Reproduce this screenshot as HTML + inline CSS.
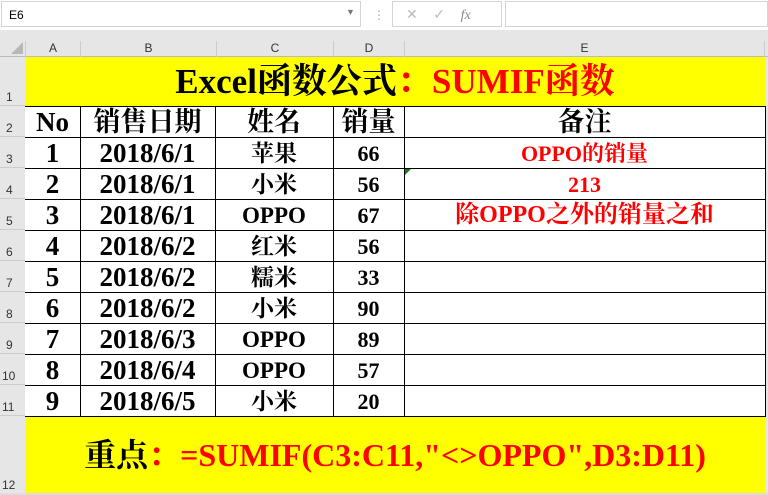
<html><head><style>
body{margin:0;width:768px;height:495px;background:#e6e6e6;position:relative;overflow:hidden;font-family:"Liberation Serif","Noto Serif CJK SC",serif}
div{position:absolute;box-sizing:border-box}
.h{font-family:"Liberation Sans",sans-serif;font-size:12px;color:#333;text-align:center}
.c{font-weight:bold;font-size:27px;text-align:center;color:#000;line-height:31px;white-space:nowrap}
.r{color:#f00;font-size:22px}
.n{font-size:23px}
.m{font-size:22px}
</style></head><body>
<div style="left:0;top:0;width:768px;height:30px;background:#fff"></div>
<div style="left:1px;top:1px;width:360px;height:26px;border:1px solid #d4d4d4;background:#fff;font-family:'Liberation Sans';font-size:12px;padding:6px 0 0 7px">E6<span style="position:absolute;left:344px;top:5px;color:#777;font-size:9px">▼</span></div>
<div style="left:373px;top:8px;color:#aaa;font-size:12px">⋮</div>
<div style="left:392px;top:1px;width:110px;height:26px;border:1px solid #d4d4d4;background:#fff;color:#bbb;font-family:'Liberation Sans';font-size:14px;padding:4px 0 0 13px">✕&nbsp;&nbsp;&nbsp;&nbsp;✓&nbsp;&nbsp;&nbsp;&nbsp;<i style="font-family:'Liberation Serif';color:#888">fx</i></div>
<div style="left:505px;top:1px;width:263px;height:26px;border:1px solid #d4d4d4;background:#fff"></div>
<div style="left:0;top:30px;width:768px;height:8px;background:#e6e6e6"></div>
<div style="left:0;top:38px;width:768px;height:19px;background:#e6e6e6;border-bottom:1px solid #bbb"></div>
<div style="left:11px;top:42px;width:0;height:0;border-left:12px solid transparent;border-bottom:12px solid #b8b8b8"></div>
<div class="h" style="left:25px;top:41px;width:55px;border-left:1px solid #ccc;height:16px">A</div>
<div class="h" style="left:80px;top:41px;width:136px;border-left:1px solid #ccc;height:16px">B</div>
<div class="h" style="left:216px;top:41px;width:117px;border-left:1px solid #ccc;height:16px">C</div>
<div class="h" style="left:333px;top:41px;width:71px;border-left:1px solid #ccc;height:16px">D</div>
<div class="h" style="left:404px;top:41px;width:361px;border-left:1px solid #ccc;border-right:1px solid #ccc;height:16px">E</div>
<div class="h" style="left:0;top:57px;width:25px;height:49px;border-bottom:1px solid #ccc;padding-top:33px;text-align:left;padding-left:6px">1</div>
<div class="h" style="left:0;top:106px;width:25px;height:31px;border-bottom:1px solid #ccc;padding-top:15px;text-align:left;padding-left:6px">2</div>
<div class="h" style="left:0;top:137px;width:25px;height:31px;border-bottom:1px solid #ccc;padding-top:15px;text-align:left;padding-left:6px">3</div>
<div class="h" style="left:0;top:168px;width:25px;height:31px;border-bottom:1px solid #ccc;padding-top:15px;text-align:left;padding-left:6px">4</div>
<div class="h" style="left:0;top:199px;width:25px;height:31px;border-bottom:1px solid #ccc;padding-top:15px;text-align:left;padding-left:6px">5</div>
<div class="h" style="left:0;top:230px;width:25px;height:31px;border-bottom:1px solid #ccc;padding-top:15px;text-align:left;padding-left:6px">6</div>
<div class="h" style="left:0;top:261px;width:25px;height:31px;border-bottom:1px solid #ccc;padding-top:15px;text-align:left;padding-left:6px">7</div>
<div class="h" style="left:0;top:292px;width:25px;height:31px;border-bottom:1px solid #ccc;padding-top:15px;text-align:left;padding-left:6px">8</div>
<div class="h" style="left:0;top:323px;width:25px;height:31px;border-bottom:1px solid #ccc;padding-top:15px;text-align:left;padding-left:6px">9</div>
<div class="h" style="left:0;top:354px;width:25px;height:31px;border-bottom:1px solid #ccc;padding-top:15px;text-align:left;padding-left:2px">10</div>
<div class="h" style="left:0;top:385px;width:25px;height:31px;border-bottom:1px solid #ccc;padding-top:15px;text-align:left;padding-left:2px">11</div>
<div class="h" style="left:0;top:416px;width:25px;height:79px;padding-top:62px;text-align:left;padding-left:2px">12</div>
<div style="left:25px;top:57px;width:740px;height:49px;background:#ff0;text-align:center;font-weight:bold;font-size:35px;line-height:49px;white-space:nowrap">Excel函数公式<span style="color:#f00">：SUMIF函数</span></div>
<div style="left:25px;top:106px;width:740px;height:310px;background:#fff"></div>
<div style="left:25px;top:106px;width:741px;height:311px;border:1px solid #000;border-width:1px 1px 1px 0"></div>
<div style="left:80px;top:106px;width:1px;height:310px;background:#000"></div>
<div style="left:215px;top:106px;width:1px;height:310px;background:#000"></div>
<div style="left:333px;top:106px;width:1px;height:310px;background:#000"></div>
<div style="left:404px;top:106px;width:1px;height:310px;background:#000"></div>
<div style="left:25px;top:137px;width:741px;height:1px;background:#000"></div>
<div style="left:25px;top:168px;width:741px;height:1px;background:#000"></div>
<div style="left:25px;top:199px;width:741px;height:1px;background:#000"></div>
<div style="left:25px;top:230px;width:741px;height:1px;background:#000"></div>
<div style="left:25px;top:261px;width:741px;height:1px;background:#000"></div>
<div style="left:25px;top:292px;width:741px;height:1px;background:#000"></div>
<div style="left:25px;top:323px;width:741px;height:1px;background:#000"></div>
<div style="left:25px;top:354px;width:741px;height:1px;background:#000"></div>
<div style="left:25px;top:385px;width:741px;height:1px;background:#000"></div>
<div style="left:405px;top:169px;width:0;height:0;border-top:6px solid #1e7a1e;border-right:6px solid transparent"></div>
<div class="c" style="left:25px;top:107px;width:55px">No</div>
<div class="c" style="left:80px;top:107px;width:135px">销售日期</div>
<div class="c" style="left:215px;top:107px;width:118px">姓名</div>
<div class="c" style="left:333px;top:107px;width:71px">销量</div>
<div class="c" style="left:404px;top:107px;width:361px">备注</div>
<div class="c r" style="left:404px;top:138px;width:361px">OPPO的销量</div>
<div class="c r" style="left:404px;top:169px;width:361px">213</div>
<div class="c r" style="left:404px;top:200px;width:361px;font-size:24px">除OPPO之外的销量之和</div>
<div class="c" style="left:25px;top:138px;width:55px">1</div><div class="c" style="left:80px;top:138px;width:135px">2018/6/1</div><div class="c n" style="left:215px;top:138px;width:118px">苹果</div><div class="c m" style="left:333px;top:138px;width:71px">66</div>
<div class="c" style="left:25px;top:169px;width:55px">2</div><div class="c" style="left:80px;top:169px;width:135px">2018/6/1</div><div class="c n" style="left:215px;top:169px;width:118px">小米</div><div class="c m" style="left:333px;top:169px;width:71px">56</div>
<div class="c" style="left:25px;top:200px;width:55px">3</div><div class="c" style="left:80px;top:200px;width:135px">2018/6/1</div><div class="c n" style="left:215px;top:200px;width:118px">OPPO</div><div class="c m" style="left:333px;top:200px;width:71px">67</div>
<div class="c" style="left:25px;top:231px;width:55px">4</div><div class="c" style="left:80px;top:231px;width:135px">2018/6/2</div><div class="c n" style="left:215px;top:231px;width:118px">红米</div><div class="c m" style="left:333px;top:231px;width:71px">56</div>
<div class="c" style="left:25px;top:262px;width:55px">5</div><div class="c" style="left:80px;top:262px;width:135px">2018/6/2</div><div class="c n" style="left:215px;top:262px;width:118px">糯米</div><div class="c m" style="left:333px;top:262px;width:71px">33</div>
<div class="c" style="left:25px;top:293px;width:55px">6</div><div class="c" style="left:80px;top:293px;width:135px">2018/6/2</div><div class="c n" style="left:215px;top:293px;width:118px">小米</div><div class="c m" style="left:333px;top:293px;width:71px">90</div>
<div class="c" style="left:25px;top:324px;width:55px">7</div><div class="c" style="left:80px;top:324px;width:135px">2018/6/3</div><div class="c n" style="left:215px;top:324px;width:118px">OPPO</div><div class="c m" style="left:333px;top:324px;width:71px">89</div>
<div class="c" style="left:25px;top:355px;width:55px">8</div><div class="c" style="left:80px;top:355px;width:135px">2018/6/4</div><div class="c n" style="left:215px;top:355px;width:118px">OPPO</div><div class="c m" style="left:333px;top:355px;width:71px">57</div>
<div class="c" style="left:25px;top:386px;width:55px">9</div><div class="c" style="left:80px;top:386px;width:135px">2018/6/5</div><div class="c n" style="left:215px;top:386px;width:118px">小米</div><div class="c m" style="left:333px;top:386px;width:71px">20</div>
<div style="left:25px;top:417px;width:740px;height:76px;background:#ff0;text-align:center;font-weight:bold;font-size:32px;line-height:76px;white-space:nowrap">重点<span style="color:#f00">：=SUMIF(C3:C11,"&lt;&gt;OPPO",D3:D11)</span></div>
<div style="left:0;top:493px;width:768px;height:2px;background:#ddd"></div>
</body></html>
